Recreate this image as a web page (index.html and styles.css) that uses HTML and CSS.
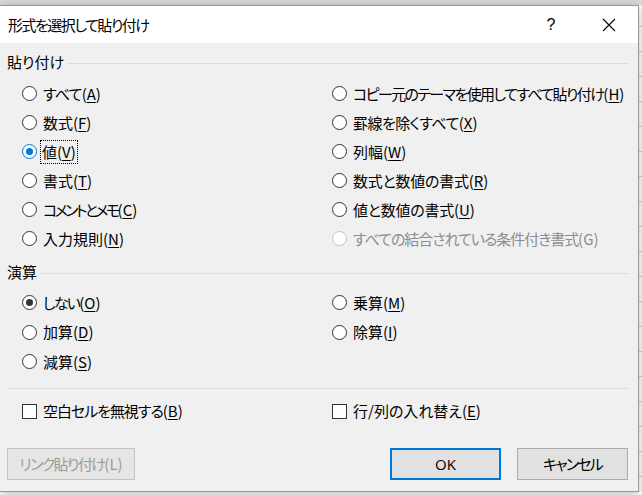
FILE: index.html
```html
<!DOCTYPE html>
<html lang="ja">
<head>
<meta charset="utf-8">
<title>形式を選択して貼り付け</title>
<link rel="stylesheet" href="styles.css">
</head>
<body>
<div class="sheet">
  <div class="sheet-row">
    <div class="cell c0">0</div>
    <div class="cell sel">#N/A</div>
    <div class="cell c2">#######</div>
    <div class="cell num w93">1</div>
    <div class="cell num w97">61</div>
    <div class="cell num w97">7</div>
    <div class="cell num w97">30</div>
  </div>
</div>

<div class="dialog">
  <div class="titlebar">
    <span class="title">形式を選択して貼り付け</span>
    <span class="cap-btn help">?</span>
    <span class="cap-btn close">
      <svg width="14" height="14" viewBox="0 0 14 14"><path d="M1 1 L13 13 M13 1 L1 13" stroke="#000" stroke-width="1.1" fill="none"/></svg>
    </span>
  </div>
  <div class="body">
    <div class="group-head"><span class="group-label">貼り付け</span><span class="rule"></span></div>
    <div class="opts">
      <div class="opt"><span class="radio"></span><span class="lbl"><span class="k08">すべて</span>(<u>A</u>)</span></div>
      <div class="opt"><span class="radio"></span><span class="lbl"><span class="k16">コピー元のテーマを使用してすべて貼り付け</span>(<u>H</u>)</span></div>
      <div class="opt"><span class="radio"></span><span class="lbl">数式(<u>F</u>)</span></div>
      <div class="opt"><span class="radio"></span><span class="lbl"><span class="k05">罫線を除くすべて</span>(<u>X</u>)</span></div>
      <div class="opt"><span class="radio on-blue"></span><span class="lbl focus">値(<u>V</u>)</span></div>
      <div class="opt"><span class="radio"></span><span class="lbl">列幅(<u>W</u>)</span></div>
      <div class="opt"><span class="radio"></span><span class="lbl">書式(<u>T</u>)</span></div>
      <div class="opt"><span class="radio"></span><span class="lbl"><span class="k02">数式と数値の書式</span>(<u>R</u>)</span></div>
      <div class="opt"><span class="radio"></span><span class="lbl"><span class="k26">コメントとメモ</span>(<u>C</u>)</span></div>
      <div class="opt"><span class="radio"></span><span class="lbl"><span class="k02">値と数値の書式</span>(<u>U</u>)</span></div>
      <div class="opt"><span class="radio"></span><span class="lbl">入力規則(<u>N</u>)</span></div>
      <div class="opt disabled"><span class="radio"></span><span class="lbl"><span class="k10">すべての結合されている条件付き書式</span>(G)</span></div>
    </div>

    <div class="group-head g2"><span class="group-label">演算</span><span class="rule"></span></div>
    <div class="opts ops">
      <div class="opt"><span class="radio on-dark"></span><span class="lbl"><span class="k18">しない</span>(<u>O</u>)</span></div>
      <div class="opt"><span class="radio"></span><span class="lbl">乗算(<u>M</u>)</span></div>
      <div class="opt"><span class="radio"></span><span class="lbl">加算(<u>D</u>)</span></div>
      <div class="opt"><span class="radio"></span><span class="lbl">除算(<u>I</u>)</span></div>
      <div class="opt"><span class="radio"></span><span class="lbl">減算(<u>S</u>)</span></div>
    </div>

    <div class="sep"></div>

    <div class="opts checks">
      <div class="opt"><span class="check"></span><span class="lbl"><span class="k10">空白セルを無視する</span>(<u>B</u>)</span></div>
      <div class="opt"><span class="check"></span><span class="lbl">行/列の入れ替え(<u>E</u>)</span></div>
    </div>

    <div class="buttons">
      <div class="btn link"><span class="k16">リンク貼り付け</span>(L)</div>
      <div class="spacer"></div>
      <div class="btn ok">OK</div>
      <div class="btn cancel"><span class="k18">キャンセル</span></div>
    </div>
  </div>
</div>
</body>
</html>
```

FILE: styles.css
```css
html, body {
  margin: 0;
  padding: 0;
}
body {
  width: 642px;
  height: 495px;
  overflow: hidden;
  position: relative;
  font-family: "Noto Sans CJK JP", "Noto Sans", sans-serif;
  font-feature-settings: "palt";
  color: #000;
}

/* Excel sheet behind the dialog */
.sheet {
  height: 490px;
  border-top: 5px solid #dadada;
  background-color: #fff;
  background-image: repeating-linear-gradient(to bottom, transparent 0, transparent 21px, #d4d4d4 21px, #d4d4d4 22px, transparent 22px, transparent 25px);
  padding-top: 477px;
  box-sizing: border-box;
  overflow: hidden;
}
.sheet-row {
  display: flex;
  height: 25px;
  font-family: "Liberation Sans", Arial, sans-serif;
  font-size: 15px;
  line-height: 25px;
  background: #fff;
}
.cell {
  box-sizing: border-box;
  border-right: 1px solid #d4d4d4;
  padding: 0 4px;
  white-space: nowrap;
  overflow: hidden;
}
.c0 { width: 12px; text-align: right; padding: 0; }
.sel { width: 135px; background: #d0d0d0; text-align: center; border-left: 2px solid #217346; border-right: 2px solid #217346; }
.c2 { width: 97px; text-align: center; }
.num { text-align: right; }
.w93 { width: 93px; }
.w97 { width: 97px; }

/* Dialog window */
.dialog {
  position: absolute;
  left: 0;
  top: 5px;
  width: 639px;
  box-sizing: border-box;
  border-top: 1px solid #9a9a9a;
  border-right: 1px solid #9a9a9a;
  border-bottom: 1px solid #9a9a9a;
  background: #f0f0f0;
  box-shadow: 0 2px 10px rgba(0, 0, 0, 0.28);
  font-size: 15px;
}
.titlebar {
  height: 37px;
  background: #fff;
  display: flex;
  align-items: center;
  padding-left: 8px;
}
.title {
  flex: 1;
  font-size: 15px;
  line-height: 20px;
  letter-spacing: -1.5px;
}
.cap-btn {
  width: 58px;
  height: 37px;
  display: flex;
  align-items: center;
  justify-content: center;
  font-family: "Liberation Sans", Arial, sans-serif;
  font-size: 16px;
}
.close svg { display: block; }

.body {
  padding: 9px 10px 11px 7px;
}
.group-head {
  display: flex;
  align-items: center;
  height: 20px;
}
.group-label {
  line-height: 20px;
  margin-right: 4px;
  white-space: nowrap;
}
.rule {
  flex: 1;
  height: 1px;
  background: #dcdcdc;
  margin-top: 2px;
}
.g2 { margin-top: 9px; }

.opts {
  display: grid;
  grid-template-columns: 310px 1fr;
  grid-auto-rows: 29px;
  padding-left: 15px;
  margin-top: 7px;
}
.ops { margin-top: 6px; grid-auto-rows: 29.5px; }
.checks { margin-top: 8px; }

.opt {
  display: flex;
  align-items: center;
  white-space: nowrap;
}
.lbl {
  margin-left: 5px;
  line-height: 20px;
  padding: 1px 1px;
}
.lbl u {
  text-decoration: underline;
  text-underline-offset: 2px;
  text-decoration-thickness: 1px;
}
.k02 { letter-spacing: -0.25px; }
.k05 { letter-spacing: -0.55px; }
.k08 { letter-spacing: -0.8px; }
.k10 { letter-spacing: -1.05px; }
.k16 { letter-spacing: -1.6px; }
.k18 { letter-spacing: -1.8px; }
.k26 { letter-spacing: -2.6px; }
.focus {
  outline: 1px dotted #000;
  outline-offset: 0;
  margin-left: 4px;
}

.radio {
  width: 15px;
  height: 15px;
  box-sizing: border-box;
  border: 1px solid #333;
  border-radius: 50%;
  background: #fff;
  position: relative;
  flex: none;
}
.radio.on-blue { border-color: #0078d7; }
.radio.on-blue::after,
.radio.on-dark::after {
  content: "";
  position: absolute;
  left: 3px;
  top: 3px;
  width: 7px;
  height: 7px;
  border-radius: 50%;
  background: #0078d7;
}
.radio.on-dark::after { background: #333; }
.disabled .radio { border-color: #c5c5c5; }
.disabled .lbl { color: #8d8d8d; }

.check {
  width: 15px;
  height: 15px;
  box-sizing: border-box;
  border: 1px solid #333;
  background: #fff;
  flex: none;
}

.sep {
  height: 1px;
  background: #dcdcdc;
  margin-top: 11px;
}

.buttons {
  display: flex;
  margin-top: 22px;
  gap: 16px;
}
.spacer { flex: 1; }
.btn {
  height: 32px;
  box-sizing: border-box;
  display: flex;
  align-items: center;
  justify-content: center;
  background: #e1e1e1;
  border: 1px solid #adadad;
  font-size: 15px;
  white-space: nowrap;
}
.link {
  width: 128px;
  color: #9b9b9b;
  background: #e5e5e5;
  border-color: #c3c3c3;
}
.ok {
  width: 111px;
  border: 2px solid #0078d7;
  font-family: "Open Sans", "Noto Sans CJK JP", sans-serif;
}
.cancel { width: 111px; }
```
